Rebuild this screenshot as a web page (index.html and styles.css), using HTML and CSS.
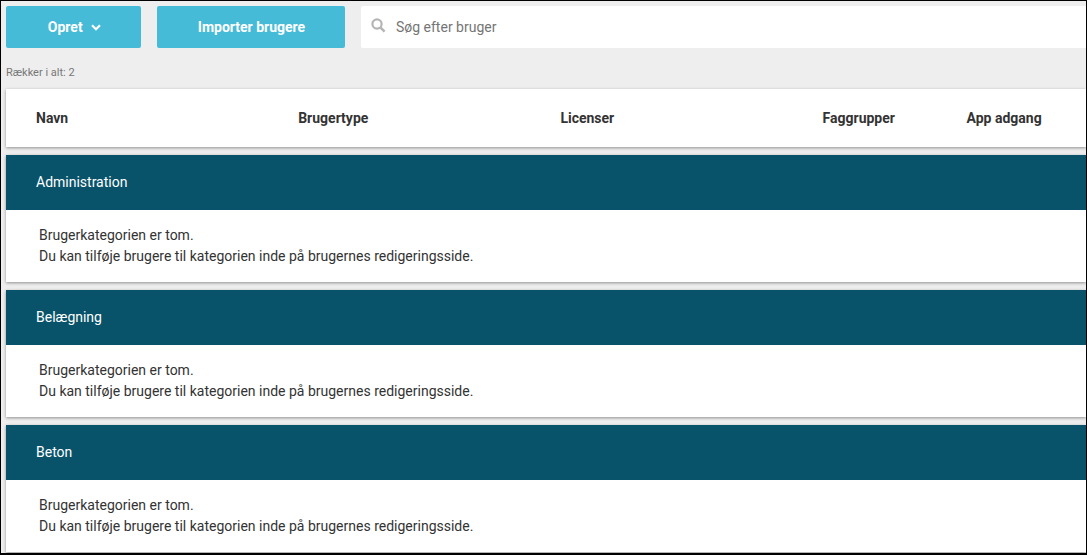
FILE: index.html
```html
<!DOCTYPE html>
<html lang="da">
<head>
<meta charset="utf-8">
<title>Brugere</title>
<link rel="stylesheet" href="styles.css">
</head>
<body>
<div class="frame">
  <div class="toolbar">
    <button class="btn btn-create">Opret
      <svg class="chev" width="10" height="7" viewBox="0 0 10 7"><path d="M1 1.2 5 5.2 9 1.2" fill="none" stroke="#fff" stroke-width="2.2"/></svg>
    </button>
    <button class="btn btn-import">Importer brugere</button>
    <div class="search">
      <svg class="search-icon" width="15" height="15" viewBox="0 0 15 15"><circle cx="6" cy="6" r="4.6" fill="none" stroke="#b5b5b5" stroke-width="2.2"/><path d="M9.3 9.3 13.6 13.6" stroke="#b5b5b5" stroke-width="2.6"/></svg>
      <span>Søg efter bruger</span>
    </div>
  </div>
  <div class="count">Rækker i alt: 2</div>
  <div class="card head">
    <div class="col">Navn</div>
    <div class="col">Brugertype</div>
    <div class="col">Licenser</div>
    <div class="col col-s">Faggrupper</div>
    <div class="col">App adgang</div>
  </div>
  <section class="card group">
    <h2>Administration</h2>
    <p>Brugerkategorien er tom.<br>Du kan tilføje brugere til kategorien inde på brugernes redigeringsside.</p>
  </section>
  <section class="card group">
    <h2>Belægning</h2>
    <p>Brugerkategorien er tom.<br>Du kan tilføje brugere til kategorien inde på brugernes redigeringsside.</p>
  </section>
  <section class="card group">
    <h2>Beton</h2>
    <p>Brugerkategorien er tom.<br>Du kan tilføje brugere til kategorien inde på brugernes redigeringsside.</p>
  </section>
</div>
</body>
</html>
```
FILE: styles.css
```css
html, body { margin: 0; height: 100%; }
body { overflow: hidden; background: #000; font-family: Roboto, "Liberation Sans", sans-serif; }
.frame {
  box-sizing: border-box;
  height: 552px;
  width: 1085px;
  margin: 1px 0 0 1px;
  padding: 5px 0 0 5px;
  background: #eee;
  overflow: hidden;
}
.toolbar { display: flex; height: 42px; }
.btn {
  height: 42px;
  border: 0;
  border-radius: 2px;
  background: #46bbd7;
  color: #fff;
  font: 700 14px Roboto, sans-serif;
  padding: 0;
}
.btn-create { width: 135px; margin-right: 16px; padding-left: 2px; }
.chev { margin-left: 5px; vertical-align: 1px; }
.btn-import { width: 188px; margin-right: 16px; padding-left: 1px; }
.search {
  flex: 1;
  display: flex;
  align-items: center;
  background: #fff;
  border-radius: 2px 0 0 2px;
  padding-left: 10px;
  color: #757575;
  font-size: 14px;
}
.search-icon { margin-right: 10px; margin-top: -3px; }
.count { height: 41px; box-sizing: border-box; padding-top: 18px; font-size: 11px; line-height: 13px; color: #777; }
.card { background: #fff; box-shadow: 0 1px 3px rgba(0,0,0,.4); }
.head {
  display: flex;
  align-items: center;
  height: 58px;
  margin-bottom: 8px;
  padding-left: 30px;
  font-size: 14px;
  font-weight: 700;
  color: #333;
}
.col { flex: none; width: 262.2px; }
.col-s { width: 144px; }
.group { height: 127px; margin-bottom: 8px; }
.group h2 {
  margin: 0;
  height: 55px;
  padding-left: 30px;
  background: #09536a;
  color: #fff;
  font-size: 14px;
  font-weight: 400;
  line-height: 55px;
}
.group p {
  margin: 0;
  padding: 15px 0 0 33px;
  font-size: 14px;
  line-height: 21px;
  color: #333;
}
```
